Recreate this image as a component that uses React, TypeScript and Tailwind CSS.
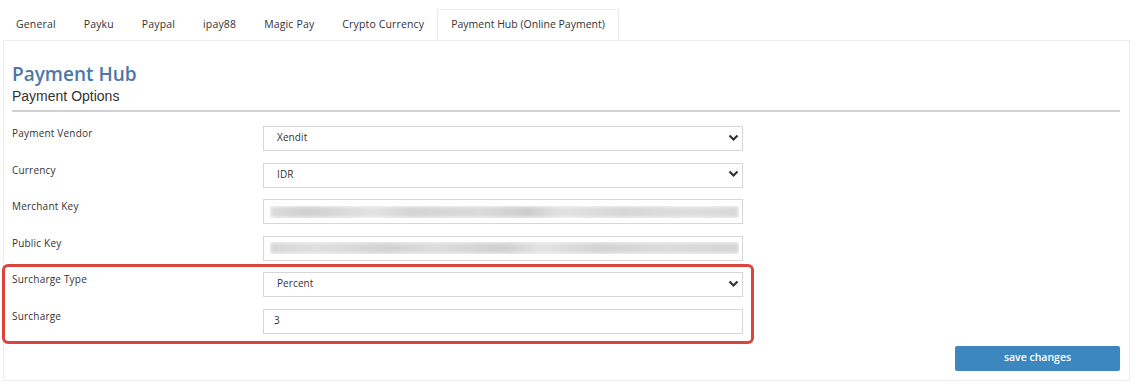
import React from "react";

const font = { fontFamily: '"Open Sans", "Noto Sans", sans-serif' };

function Chevron() {
  return (
    <svg width="11" height="8" viewBox="0 0 11 8" className="shrink-0">
      <path d="M1.5 1.5 L5.5 5.5 L9.5 1.5" fill="none" stroke="#333" strokeWidth="2.2" />
    </svg>
  );
}

function Row({ label, children }: { label: string; children: React.ReactNode }) {
  return (
    <div className="flex h-[36.6px] items-start">
      <div className="w-[251px] text-[10px] tracking-[0.2px] text-[#333]">{label}</div>
      <div className="flex h-[25px] w-[480px] items-center justify-between border border-[#d6d6d6] bg-white pb-[2px] pl-[13px] pr-[3px] text-[10px] tracking-[0.1px]">
        {children}
      </div>
    </div>
  );
}

function Blur({ variant }: { variant: number }) {
  return (
    <div className="-ml-[7px] mt-[2px] h-[12px] flex-1 overflow-hidden">
      <div
        className="h-full w-full blur-[2px]"
        style={{
          background:
            variant === 0
              ? "linear-gradient(90deg,#dcdcdc 0%,#cfcfcf 8%,#e3e3e3 22%,#d4d4d4 30%,#dadada 45%,#cdcdcd 55%,#e2e2e2 62%,#d6d6d6 75%,#dedede 90%,#d8d8d8 100%)"
              : "linear-gradient(90deg,#d6d6d6 0%,#e0e0e0 10%,#d2d2d2 25%,#dddddd 35%,#cfcfcf 50%,#e4e4e4 58%,#d3d3d3 70%,#dcdcdc 85%,#d5d5d5 100%)",
        }}
      />
    </div>
  );
}

export default function App() {
  const tabs = ["General", "Payku", "Paypal", "ipay88", "Magic Pay", "Crypto Currency"];
  return (
    <div className="relative h-[390px] w-[1136px] overflow-hidden bg-white text-[#333]" style={font}>
      <div className="flex h-[40px] items-end pl-[2px]">
        {tabs.map((t) => (
          <div key={t} className="flex h-[31px] items-center px-[14px] text-[10.5px] tracking-[0.15px] text-[#333]">
            {t}
          </div>
        ))}
        <div className="-ml-[1px] flex h-[31px] items-center border border-b-0 border-[#ececec] bg-white px-[13px] text-[10.5px] text-[#333]">
          Payment Hub (Online Payment)
        </div>
      </div>
      <div className="ml-[3px] h-[341px] w-[1127px] border border-[#ececec] pl-[8px] pr-[9px]">
        <div className="pt-[21px] text-[19px] font-semibold leading-[24px] text-[#4a78a8]">Payment Hub</div>
        <div
          className="mt-[1px] text-[14px] leading-[18px] text-[#333]"
          style={{ fontFamily: '"Liberation Sans", Arial, sans-serif' }}
        >
          Payment Options
        </div>
        <div className="mt-[5px] h-[2px] bg-[#d0d0d0]" />
        <div className="mt-[14px]">
          <Row label="Payment Vendor">
            <span>Xendit</span>
            <Chevron />
          </Row>
          <Row label="Currency">
            <span>IDR</span>
            <Chevron />
          </Row>
          <Row label="Merchant Key">
            <Blur variant={0} />
          </Row>
          <Row label="Public Key">
            <Blur variant={1} />
          </Row>
          <Row label="Surcharge Type">
            <span>Percent</span>
            <Chevron />
          </Row>
          <Row label="Surcharge">
            <span className="-ml-[3px]">3</span>
          </Row>
        </div>
        <div className="flex justify-end">
          <button className="h-[25px] w-[165px] rounded-[2px] bg-[#3c87bf] text-[10.5px] font-semibold text-white">
            save changes
          </button>
        </div>
      </div>
      <div className="pointer-events-none absolute left-[2px] top-[264px] h-[80px] w-[752px] rounded-[6px] border-[3px] border-[#d9443d]" />
    </div>
  );
}
